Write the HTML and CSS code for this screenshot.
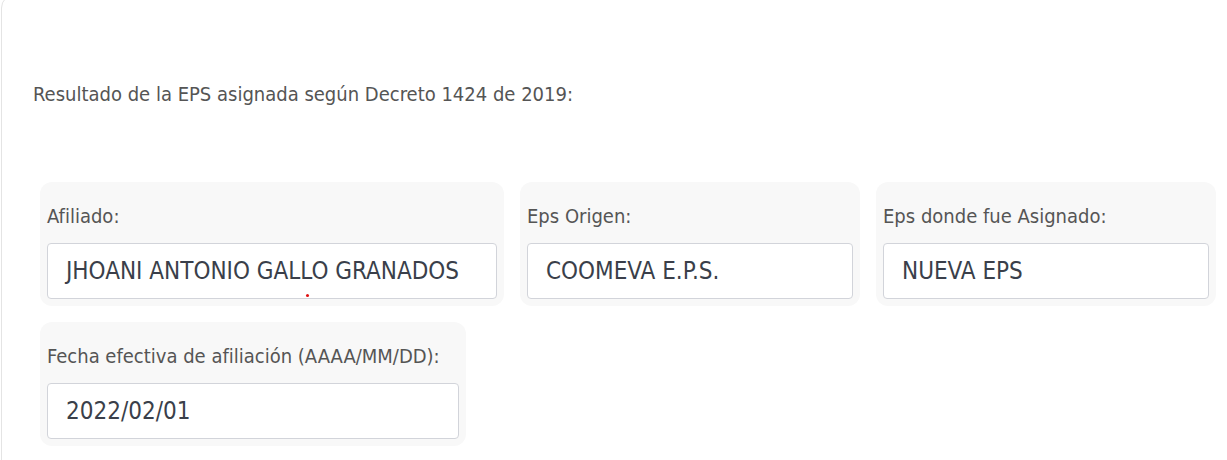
FILE: index.html
```html
<!DOCTYPE html>
<html lang="es">
<head>
<meta charset="utf-8">
<title>Resultado EPS</title>
<link rel="stylesheet" href="styles.css">
</head>
<body>
<div class="card">
  <p class="title">Resultado de la EPS asignada según Decreto 1424 de 2019:</p>
  <div class="fields">
    <div class="field field-afiliado">
      <label class="label">Afiliado:</label>
      <div class="input">JHOANI ANTONIO GALLO GRANADOS<span class="dot"></span></div>
    </div>
    <div class="field field-mid">
      <label class="label">Eps Origen:</label>
      <div class="input">COOMEVA E.P.S.</div>
    </div>
    <div class="field field-mid">
      <label class="label">Eps donde fue Asignado:</label>
      <div class="input">NUEVA EPS</div>
    </div>
    <div class="field field-fecha">
      <label class="label">Fecha efectiva de afiliación (AAAA/MM/DD):</label>
      <div class="input">2022/02/01</div>
    </div>
  </div>
</div>
</body>
</html>
```

FILE: styles.css
```css
html, body {
  margin: 0;
  padding: 0;
  background: #ffffff;
  overflow: hidden;
}
body {
  font-family: "DejaVu Sans Condensed", "DejaVu Sans", sans-serif;
  color: #555555;
}
.card {
  margin: -6px -40px 0 1px;
  border: 1px solid #e4e4e4;
  border-radius: 14px;
  padding: 0 0 20px 31px;
  height: 480px;
  box-sizing: border-box;
}
.title {
  margin: 0;
  padding-top: 87px;
  font-size: 20px;
  line-height: 24px;
  color: #555555;
}
.fields {
  display: flex;
  flex-wrap: wrap;
  gap: 16px 16px;
  margin-top: 76px;
  margin-left: 7px;
  width: 1182px;
}
.field {
  background: #f8f8f8;
  border-radius: 12px;
  padding: 7px;
  box-sizing: border-box;
}
.field-afiliado { width: 464px; }
.field-mid { width: 340px; }
.field-fecha { width: 426px; }
.label {
  display: block;
  margin: 15px 0 15px;
  font-size: 20px;
  line-height: 24px;
  color: #555555;
  white-space: nowrap;
}
.input {
  position: relative;
  height: 56px;
  box-sizing: border-box;
  border: 1px solid #d2d4da;
  border-radius: 4px;
  background: #ffffff;
  padding: 0 0 0 18px;
  font-size: 24px;
  line-height: 54px;
  color: #3a3f4a;
  white-space: nowrap;
  overflow: hidden;
}
.dot {
  position: absolute;
  left: 258px;
  top: 50px;
  width: 3px;
  height: 3px;
  border-radius: 50%;
  background: #e01010;
}
```
